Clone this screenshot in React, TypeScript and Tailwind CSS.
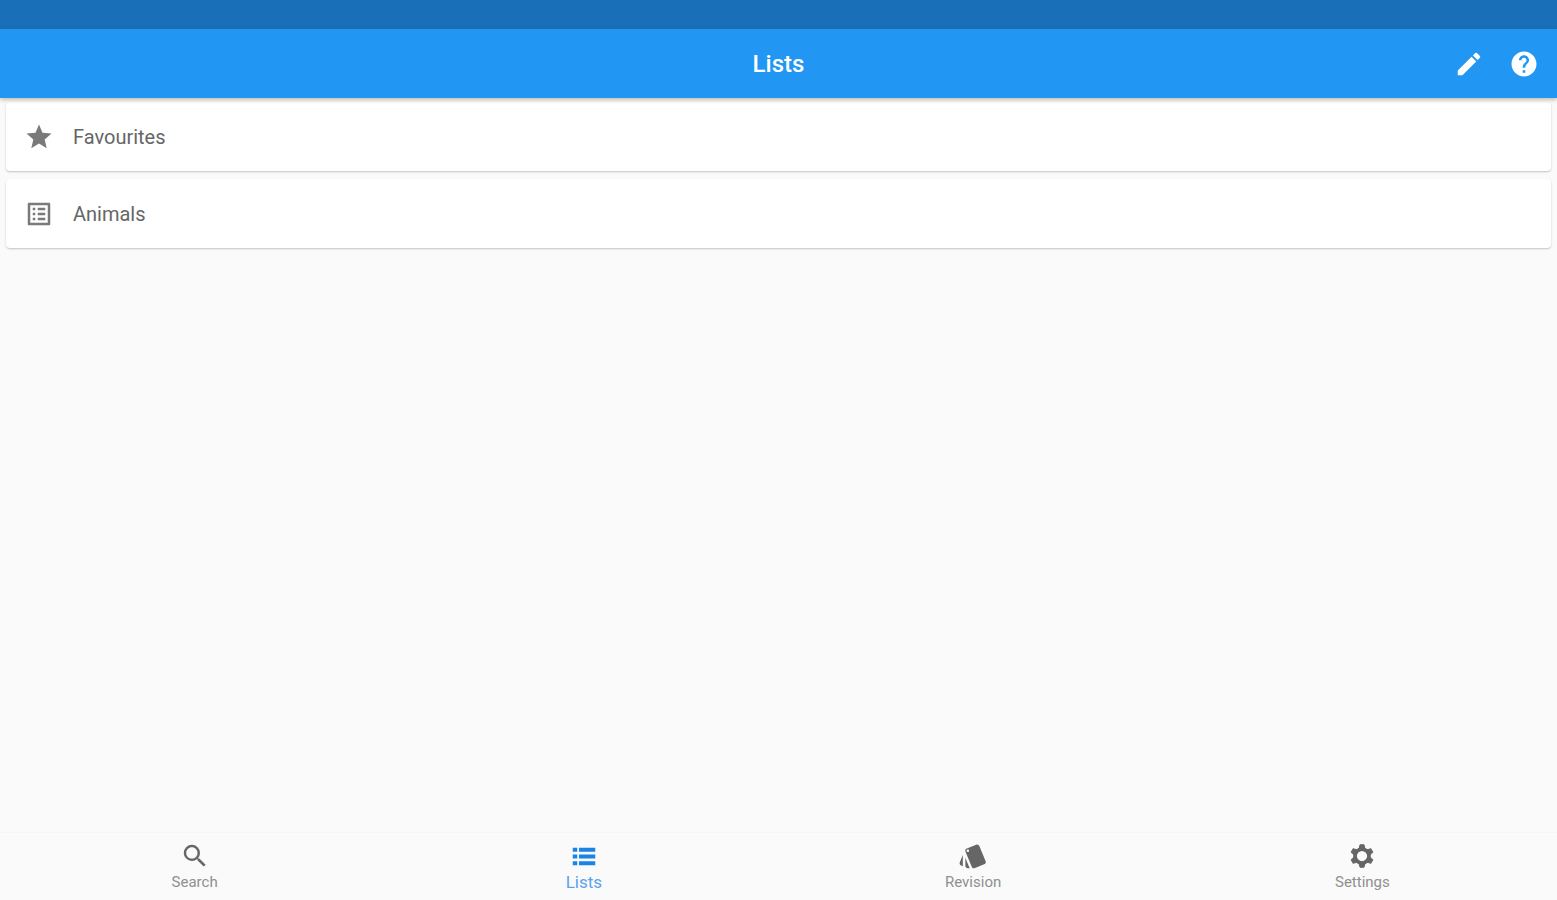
import { useState } from "react";
import {
  MdEdit,
  MdHelp,
  MdListAlt,
  MdSearch,
  MdStar,
  MdStyle,
} from "react-icons/md";

function ListIcon({ className }: { className?: string }) {
  return (
    <svg viewBox="0 0 24 24" fill="currentColor" className={className}>
      <path d="M3 5.4h3.6v3.2H3zM8 5.4h13v3.2H8zM3 10.8h3.6v3.2H3zM8 10.8h13v3.2H8zM3 16.2h3.6v3.2H3zM8 16.2h13v3.2H8z" />
    </svg>
  );
}

function GearIcon({ className }: { className?: string }) {
  return (
    <svg viewBox="0 0 24 24" fill="currentColor" className={className}>
      <circle cx="12" cy="12" r="5.6" fill="none" stroke="currentColor" strokeWidth="3" />
      {[0, 60, 120, 180, 240, 300].map((angle) => (
        <path
          key={angle}
          d="M10.4 3h3.2l.9 4h-5z"
          stroke="currentColor"
          strokeWidth="0.8"
          strokeLinejoin="round"
          transform={`rotate(${angle} 12 12)`}
        />
      ))}
    </svg>
  );
}

const lists = [
  { name: "Favourites", icon: MdStar },
  { name: "Animals", icon: MdListAlt },
];

const tabs = [
  { name: "Search", icon: MdSearch },
  { name: "Lists", icon: ListIcon },
  { name: "Revision", icon: MdStyle },
  { name: "Settings", icon: GearIcon },
];

export default function App() {
  const [active, setActive] = useState("Lists");

  return (
    <div className="flex min-h-screen flex-col bg-[#fafafa] font-['Roboto',sans-serif]">
      <div className="h-[29px] bg-[#1a70b8]" />

      <header className="z-10 grid h-[69px] grid-cols-[1fr_auto_1fr] items-center bg-[#2196f3] px-[18px] text-white shadow-[0_2px_4px_rgba(80,50,0,0.3)]">
        <h1 className="col-start-2 text-2xl font-medium">Lists</h1>
        <div className="flex items-center justify-end gap-[25px]">
          <button aria-label="Edit">
            <MdEdit className="size-[30px]" />
          </button>
          <button aria-label="Help">
            <MdHelp className="size-[30px]" />
          </button>
        </div>
      </header>

      <main className="flex-1">
        <ul className="flex flex-col gap-2 px-[6px] pt-1">
          {lists.map(({ name, icon: Icon }) => (
            <li key={name}>
              <button className="flex h-[69px] w-full items-center gap-[19px] rounded-sm bg-white px-[18px] text-left text-[20px] text-[#666666] shadow-[0_1px_2px_rgba(0,0,0,0.22)]">
                <Icon className="size-[30px] text-[#7a7a7a]" />
                {name}
              </button>
            </li>
          ))}
        </ul>
      </main>

      <nav className="grid h-[68px] grid-cols-4 border-t border-[#f5f5f5] bg-[#fafafa]">
        {tabs.map(({ name, icon: Icon }) => (
          <button
            key={name}
            onClick={() => setActive(name)}
            className={
              name === active
                ? "flex flex-col items-center pt-2 text-[#1a83e8]"
                : "flex flex-col items-center pt-2 text-[#666666]"
            }
          >
            <Icon className="size-[30px]" />
            <span
              className={
                name === active
                  ? "text-[17px] leading-[22px] text-[#5ba3ee]"
                  : "text-[15px] leading-[22px] text-[#8f8f8f]"
              }
            >
              {name}
            </span>
          </button>
        ))}
      </nav>
    </div>
  );
}
